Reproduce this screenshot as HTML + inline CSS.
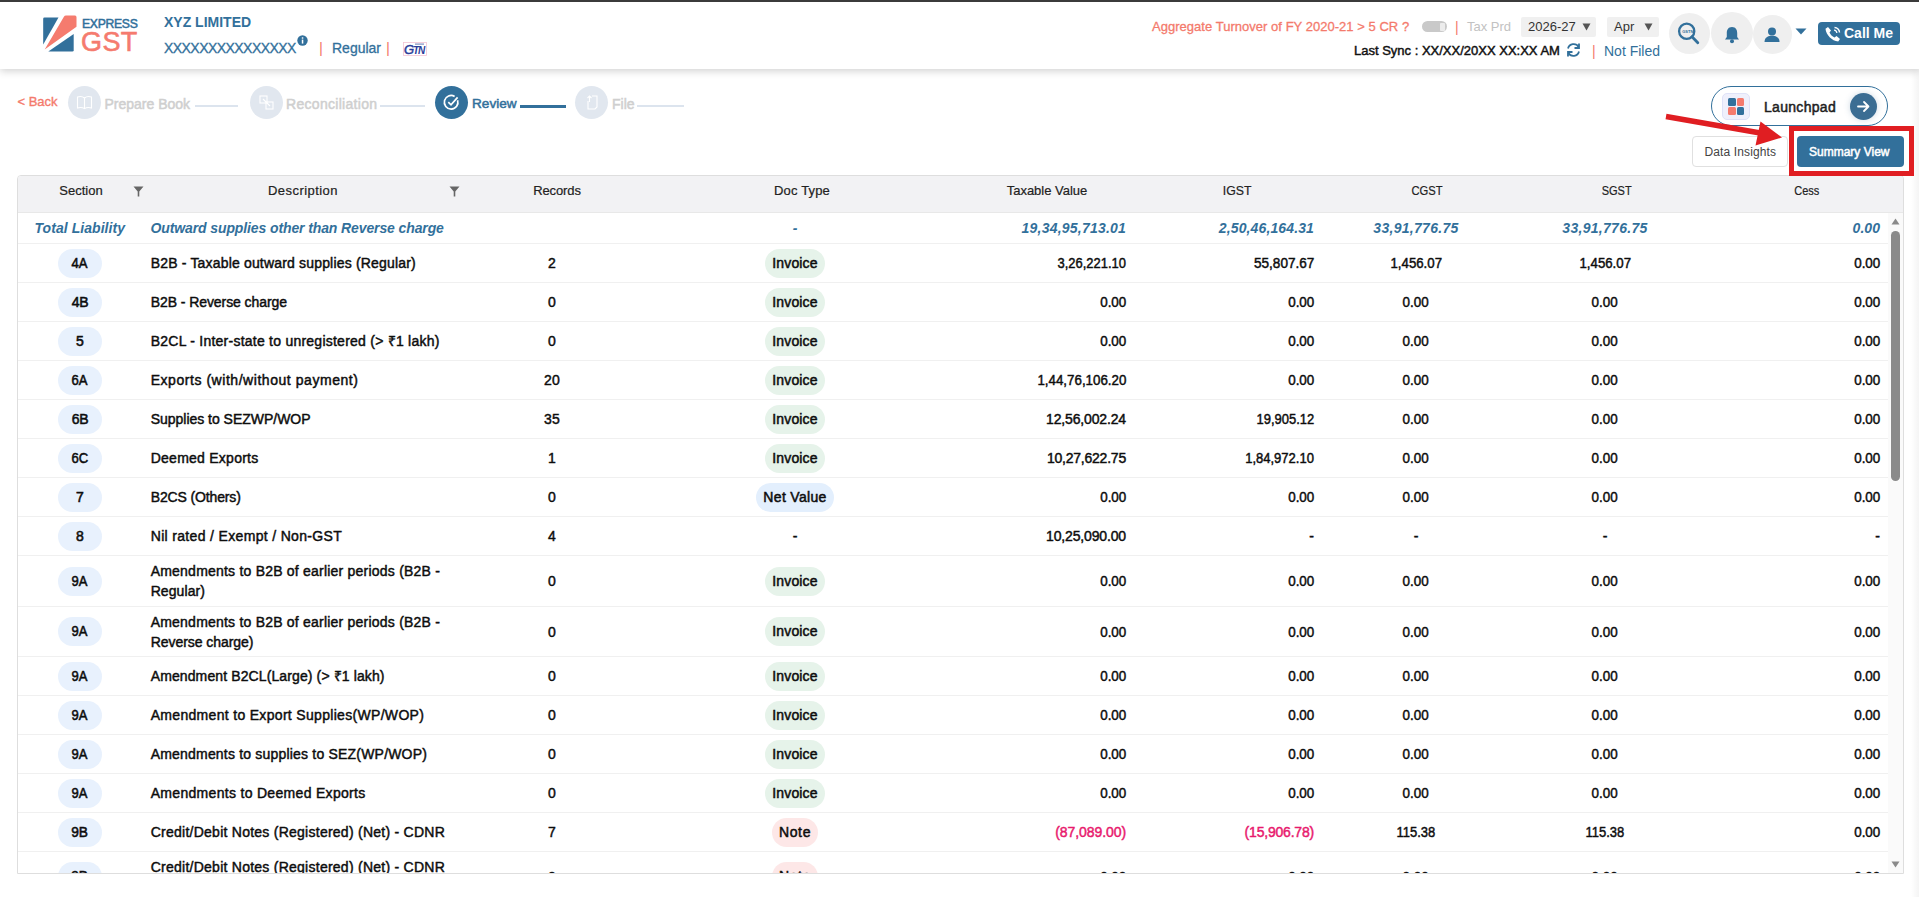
<!DOCTYPE html>
<html><head><meta charset="utf-8">
<style>
*{box-sizing:border-box}
html,body{margin:0;padding:0}
body{width:1919px;height:897px;overflow:hidden;position:relative;background:#fff;font-family:"Liberation Sans",sans-serif;color:#111}
.a{position:absolute;white-space:nowrap}
.topbar{position:absolute;left:0;top:0;width:1919px;height:2px;background:#3b3b3b;z-index:5}
.hdr{position:absolute;left:0;top:0;width:1919px;height:69px;background:#fff;box-shadow:0 2px 8px rgba(0,0,0,.19);z-index:2}
.blue{color:#32709b}
.coral{color:#f47a6c}
.circ{position:absolute;width:41px;height:41px;border-radius:50%;background:#efefef}
.sel{position:absolute;top:17px;height:20px;background:#f0f0f0;border-radius:2px;font-size:13px;line-height:20px;color:#333}
/* stepper */
.sc{position:absolute;width:33px;height:33px;border-radius:50%;background:#e1e7ef}
.sl{position:absolute;font-size:14px;color:#cfcfcf;-webkit-text-stroke:0.5px #cfcfcf;line-height:16px;top:95.5px}
.ln{position:absolute;top:105px;height:2px;background:#dce4ee}
/* table */
.tbl{position:absolute;left:17px;top:175px;width:1887px;height:699px;border:1px solid #dedede;border-radius:4px 4px 0 0;overflow:hidden;background:#fff}
.th{position:absolute;left:0;top:0;width:1886px;height:37px;background:#f2f2f4;border-bottom:1px solid #e8e8e8}
.th div{position:absolute;top:0;height:37px;line-height:29px;font-size:13px;color:#222;text-align:center;-webkit-text-stroke:0.2px #222}
.body{position:absolute;left:-18px;top:-176px;width:1919px;height:897px}
.row{position:absolute;left:17px;width:1871px;border-bottom:1px solid #f0f0f0}
.row .c{position:absolute;top:0;bottom:0;display:flex;align-items:center;font-size:14px;color:#0d0d0d;-webkit-text-stroke:0.45px currentColor}
.c.sec{left:0;width:126px;justify-content:center}
.spill{display:inline-block;width:44px;height:29px;line-height:29px;border-radius:15px;background:#e8f1fd;text-align:center;font-size:14px;-webkit-text-stroke:0.55px #0d0d0d}
.c.desc{left:133.7px;width:320px;line-height:20px;font-size:14px}
.c.rec{left:435px;width:200px;justify-content:center;font-size:14px}
.c.dt{left:628px;width:300px;justify-content:center}
.pill{display:inline-block;height:29px;line-height:29px;border-radius:15px;padding:0 7px;font-size:14px;-webkit-text-stroke:0.5px #0d0d0d}
.pill.inv{background:#e6f3ea}
.pill.net{background:#e3effd}
.pill.note{background:#fde7e7}
.c.tv,.c.ig,.c.ce{justify-content:flex-end;font-size:14px}
.c.tv{right:762px}
.c.ig{right:574px}
.c.ce{right:8px}
.c.cg{left:1299px;width:200px;justify-content:center;font-size:14px}
.c.sg{left:1488px;width:200px;justify-content:center;font-size:14px}
.neg{color:#e8196d !important}
.tot{position:absolute;left:17px;width:1871px;top:213px;height:31px;border-bottom:1px solid #f0f0f0}
.tot div{position:absolute;top:0;height:30px;line-height:30px;font-weight:bold;font-style:italic;font-size:14px;color:#32709b}
.sb{position:absolute;left:1888px;top:213px;width:15px;height:660px;background:#fafafa}
</style></head>
<body>
<div class="topbar"></div>
<div class="a" style="left:1911px;top:69px;width:8px;height:828px;background:linear-gradient(to right,rgba(0,0,0,0),rgba(0,0,0,0.045))"></div>
<div class="hdr">
  <!-- logo -->
  <svg class="a" style="left:40px;top:12px" width="100" height="44" viewBox="40 12 100 44">
    <path d="M44.5 17.4 L58.5 17.6 L43.2 44.6 L43.2 18.8 Q43.2 17.4 44.5 17.4Z" fill="#32709b"/>
    <path d="M44.7 49.6 L63.9 16.8 Q64.6 15.6 66 15.6 L75 15.6 Q76.5 15.6 76.5 17.2 L76.5 26.7 Z" fill="#f57b6e"/>
    <path d="M48.3 51.6 L73.7 33.9 L73.7 50.2 Q73.7 51.6 72.3 51.6 Z" fill="#32709b"/>
  </svg>
  <div class="a" style="left:82px;top:15.5px;font-size:12.2px;-webkit-text-stroke:0.5px #32709b;color:#32709b;letter-spacing:-0.3px;line-height:16px">EXPRESS</div>
  <div class="a" style="left:81px;top:27px;font-size:27px;color:#f57b6e;-webkit-text-stroke:0.6px #f57b6e;line-height:30px;letter-spacing:0.4px">GST</div>
  <div class="a blue" style="left:164px;top:12px;font-size:14px;font-weight:bold;line-height:20px">XYZ LIMITED</div>
  <div class="a blue" style="left:164px;top:38px;font-size:14px;letter-spacing:-0.55px;line-height:20px;-webkit-text-stroke:0.3px #32709b">XXXXXXXXXXXXXXX</div>
  <svg class="a" style="left:297px;top:35px" width="11" height="11" viewBox="0 0 11 11"><circle cx="5.5" cy="5.5" r="5.2" fill="#32709b"/><rect x="4.8" y="4.6" width="1.5" height="4" fill="#fff"/><rect x="4.8" y="2.3" width="1.5" height="1.4" fill="#fff"/></svg>
  <div class="a coral" style="left:319px;top:38px;font-size:15px;line-height:20px">|</div>
  <div class="a blue" style="left:332px;top:38px;font-size:14px;line-height:20px;-webkit-text-stroke:0.3px #32709b">Regular</div>
  <div class="a coral" style="left:386px;top:38px;font-size:15px;line-height:20px">|</div>
  <svg class="a" style="left:403px;top:40px" width="24" height="16" viewBox="0 0 24 16"><rect x="0.5" y="2.5" width="23" height="13" fill="#fff" stroke="#f3c4d4" stroke-width="0.8"/><text x="1" y="14" font-family="Liberation Sans" font-size="13" font-style="italic" fill="#2b3d9a" stroke="#2b3d9a" stroke-width="0.5">G</text><text x="10" y="14" font-family="Liberation Sans" font-size="10" font-weight="bold" font-style="italic" fill="#2b3d9a" letter-spacing="-1.2">TN</text><rect x="12" y="3.5" width="9" height="1.2" fill="#8090c0"/></svg>

  <!-- right header -->
  <div class="a coral" style="left:1152px;top:16.5px;font-size:13px;letter-spacing:0.03px;-webkit-text-stroke:0.3px #f47a6c;line-height:20px">Aggregate Turnover of FY 2020-21 &gt; 5 CR ?</div>
  <div class="a" style="left:1422px;top:21px;width:25px;height:11px;border-radius:6px;background:#c9c9c9"></div>
  <div class="a" style="left:1440px;top:23px;width:4.5px;height:8px;border-radius:1px;background:#ececec"></div>
  <div class="a coral" style="left:1455px;top:16.5px;font-size:14px;line-height:20px">|</div>
  <div class="a" style="left:1467px;top:16.5px;font-size:13px;line-height:20px;color:#c2c2c2">Tax Prd</div>
  <div class="sel" style="left:1521px;width:75px"><span style="position:absolute;left:7px">2026-27</span><svg style="position:absolute;left:61px;top:6px" width="9" height="8" viewBox="0 0 9 8"><path d="M0.5 0.5 L8.5 0.5 L4.5 7.5Z" fill="#555"/></svg></div>
  <div class="sel" style="left:1607px;width:52px"><span style="position:absolute;left:7px">Apr</span><svg style="position:absolute;left:37px;top:6px" width="9" height="8" viewBox="0 0 9 8"><path d="M0.5 0.5 L8.5 0.5 L4.5 7.5Z" fill="#555"/></svg></div>
  <div class="a" style="left:1354px;top:41px;font-size:13px;-webkit-text-stroke:0.45px #111;line-height:20px;color:#111">Last Sync : XX/XX/20XX XX:XX AM</div>
  <svg class="a" style="left:1565px;top:42px" width="17" height="16" viewBox="0 0 17 16"><path d="M3 6.5 A5.8 5.8 0 0 1 13.6 5" fill="none" stroke="#32709b" stroke-width="1.8"/><path d="M14 1.5 L14 6 L9.5 6" fill="none" stroke="#32709b" stroke-width="1.8"/><path d="M14 9.5 A5.8 5.8 0 0 1 3.4 11" fill="none" stroke="#32709b" stroke-width="1.8"/><path d="M3 14.5 L3 10 L7.5 10" fill="none" stroke="#32709b" stroke-width="1.8"/></svg>
  <div class="a coral" style="left:1592px;top:41px;font-size:14px;line-height:20px">|</div>
  <div class="a blue" style="left:1604px;top:40.5px;font-size:14px;line-height:20px">Not Filed</div>

  <div class="circ" style="left:1669px;top:12.5px"></div>
  <svg class="a" style="left:1675px;top:20px" width="28" height="28" viewBox="0 0 28 28"><circle cx="11.7" cy="11.2" r="7.6" fill="none" stroke="#32709b" stroke-width="2.3"/><path d="M17 16.8 L22.8 22.8" stroke="#32709b" stroke-width="2.8" stroke-linecap="round"/><text x="7.2" y="12.6" font-family="Liberation Sans" font-size="4" font-weight="bold" fill="#32709b">GSTN</text></svg>
  <div class="circ" style="left:1711px;top:12px;width:42px;height:42px"></div>
  <svg class="a" style="left:1722px;top:24.5px" width="20" height="20" viewBox="0 0 20 20"><path d="M10 2 C6.2 2 4.8 5 4.8 8 L4.8 12 L3 14.5 L17 14.5 L15.2 12 L15.2 8 C15.2 5 13.8 2 10 2Z" fill="#32709b"/><circle cx="10" cy="16.3" r="2" fill="#32709b"/></svg>
  <div class="circ" style="left:1753px;top:14.5px;width:39px;height:39px"></div>
  <svg class="a" style="left:1762px;top:24.5px" width="20" height="20" viewBox="0 0 20 20"><circle cx="10" cy="6.5" r="4" fill="#32709b"/><path d="M2.5 17 C2.5 12.5 6 10.8 10 10.8 C14 10.8 17.5 12.5 17.5 17Z" fill="#32709b"/></svg>
  <svg class="a" style="left:1795px;top:28px" width="12" height="7" viewBox="0 0 12 7"><path d="M0.5 0.5 L11.5 0.5 L6 6.5Z" fill="#32709b"/></svg>
  <div class="a" style="left:1818px;top:22px;width:82px;height:23px;border-radius:4px;background:#32709b"></div>
  <svg class="a" style="left:1824px;top:25px" width="18" height="18" viewBox="0 0 18 18"><path d="M4 2 L7 5.5 L5.5 7.5 C6.5 9.8 8.2 11.5 10.5 12.5 L12.5 11 L16 14 L14.2 16.5 C8 16 2 10 1.5 3.8Z" fill="#fff"/><path d="M10.5 2.5 A5 5 0 0 1 15.5 7.5" fill="none" stroke="#fff" stroke-width="1.4"/><path d="M10 5.2 A2.6 2.6 0 0 1 12.8 8" fill="none" stroke="#fff" stroke-width="1.3"/></svg>
  <div class="a" style="left:1844px;top:24px;font-size:14px;font-weight:bold;line-height:19px;color:#fff">Call Me</div>
</div>

<!-- stepper -->
<div class="a coral" style="left:17.5px;top:94px;font-size:13px;line-height:16px;-webkit-text-stroke:0.35px #f47a6c">&lt; Back</div>
<div class="sc" style="left:68px;top:86px"></div>
<svg class="a" style="left:76px;top:95px" width="17" height="15" viewBox="0 0 17 15"><path d="M1.5 2 C4 1.2 6.5 1.3 8.5 3 C10.5 1.3 13 1.2 15.5 2 L15.5 13 C13 12.3 10.5 12.4 8.5 13.6 C6.5 12.4 4 12.3 1.5 13Z M8.5 3 L8.5 13.6" fill="none" stroke="#fff" stroke-width="1.1"/></svg>
<div class="sl" style="left:104.5px">Prepare Book</div>
<div class="ln" style="left:195px;width:43px"></div>
<div class="sc" style="left:250px;top:86px"></div>
<svg class="a" style="left:258px;top:94px" width="17" height="17" viewBox="0 0 17 17"><rect x="2" y="2" width="7" height="7" fill="none" stroke="#fff" stroke-width="1.1"/><rect x="8" y="8" width="7" height="7" fill="none" stroke="#fff" stroke-width="1.1"/><path d="M5 5 L12 12" stroke="#fff" stroke-width="1.1"/></svg>
<div class="sl" style="left:286px;letter-spacing:0.3px">Reconciliation</div>
<div class="ln" style="left:380px;width:45px"></div>
<div class="sc" style="left:435px;top:86px;background:#32709b"></div>
<svg class="a" style="left:442px;top:93px" width="19" height="19" viewBox="0 0 19 19"><path d="M15.6 7.2 A6.8 6.8 0 1 1 12.6 3.4" fill="none" stroke="#fff" stroke-width="1.7"/><path d="M6.3 9.2 L9 11.8 L15.6 4.4" fill="none" stroke="#fff" stroke-width="1.7"/></svg>
<div class="sl" style="left:472px;font-size:13.6px;color:#32709b;-webkit-text-stroke:0.5px #32709b">Review</div>
<div class="ln" style="left:520px;width:46px;height:2.5px;background:#32709b"></div>
<div class="sc" style="left:575px;top:86px"></div>
<svg class="a" style="left:583px;top:94px" width="17" height="17" viewBox="0 0 17 17"><path d="M5 7 L5 15 L12 15 L14 13 L14 2 L9 2" fill="none" stroke="#fff" stroke-width="1.1"/><path d="M6.5 2 L6.5 8 M4.5 4 L6.5 2 L8.5 4" fill="none" stroke="#fff" stroke-width="1.1"/></svg>
<div class="sl" style="left:612px">File</div>
<div class="ln" style="left:637px;width:47px"></div>

<!-- launchpad -->
<div class="a" style="left:1711px;top:86px;width:177px;height:40px;border:1.5px solid #32709b;border-radius:20px;background:#fff"></div>
<div class="a" style="left:1722px;top:93px;width:28px;height:27px;border-radius:5px;background:#eff0fc;border:1px solid #dfe2f7"></div>
<div class="a" style="left:1728px;top:98px;width:7.5px;height:7.5px;border-radius:1.5px;background:#32709b"></div>
<div class="a" style="left:1736.5px;top:98px;width:7.5px;height:7.5px;border-radius:1.5px;background:#f57b6e"></div>
<div class="a" style="left:1728px;top:107px;width:7.5px;height:7.5px;border-radius:1.5px;background:#f57b6e"></div>
<div class="a" style="left:1736.5px;top:107px;width:7.5px;height:7.5px;border-radius:1.5px;background:#32709b"></div>
<div class="a" style="left:1764px;top:99px;font-size:14px;letter-spacing:0.3px;-webkit-text-stroke:0.5px #1e1e1e;line-height:16px;color:#1e1e1e">Launchpad</div>
<div class="a" style="left:1850px;top:93px;width:27px;height:27px;border-radius:50%;background:#3b6d93;box-shadow:0 0 6px rgba(59,109,147,.25)"></div>
<svg class="a" style="left:1855px;top:98px" width="17" height="17" viewBox="0 0 17 17"><path d="M3 8.5 L13.5 8.5 M9 4 L13.5 8.5 L9 13" fill="none" stroke="#fff" stroke-width="1.8" stroke-linecap="round" stroke-linejoin="round"/></svg>

<div class="a" style="left:1692px;top:136px;width:96px;height:31px;border:1px solid #e0e0e0;border-radius:4px;background:#fff"></div>
<div class="a" style="left:1704.5px;top:144px;font-size:12px;letter-spacing:0.12px;line-height:16px;color:#444">Data Insights</div>
<div class="a" style="left:1797px;top:136px;width:107px;height:31px;border-radius:4px;background:#32709b"></div>
<div class="a" style="left:1809px;top:144px;font-size:12px;-webkit-text-stroke:0.5px #fff;line-height:16px;color:#fff">Summary View</div>

<!-- table -->
<div class="tbl">
  <div class="th">
    <div style="left:0;width:126px"><span style="letter-spacing:0.028px">Section</span></div>
    <svg style="position:absolute;left:115px;top:10px" width="11" height="11" viewBox="0 0 11 11"><path d="M0.5 0.5 L10.5 0.5 L6.3 5.5 L6.3 10.5 L4.7 10.5 L4.7 5.5Z" fill="#666"/></svg>
    <div style="left:126px;width:318px"><span style="letter-spacing:0.45px">Description</span></div>
    <svg style="position:absolute;left:431px;top:10px" width="11" height="11" viewBox="0 0 11 11"><path d="M0.5 0.5 L10.5 0.5 L6.3 5.5 L6.3 10.5 L4.7 10.5 L4.7 5.5Z" fill="#666"/></svg>
    <div style="left:444px;width:190px"><span style="letter-spacing:-0.101px">Records</span></div>
    <div style="left:634px;width:300px"><span style="letter-spacing:0.159px">Doc Type</span></div>
    <div style="left:934px;width:190px"><span style="letter-spacing:-0.006px">Taxable Value</span></div>
    <div style="left:1124px;width:190px"><span style="display:inline-block;transform:scaleX(0.9461);transform-origin:center center">IGST</span></div>
    <div style="left:1314px;width:190px"><span style="display:inline-block;transform:scaleX(0.8633);transform-origin:center center">CGST</span></div>
    <div style="left:1504px;width:190px"><span style="display:inline-block;transform:scaleX(0.847);transform-origin:center center">SGST</span></div>
    <div style="left:1694px;width:190px"><span style="display:inline-block;transform:scaleX(0.8477);transform-origin:center center">Cess</span></div>
  </div>
  <div class="body">
    <div class="tot">
      <div style="left:17.5px"><span style="letter-spacing:0.056px">Total Liability</span></div>
      <div style="left:133.5px"><span style="letter-spacing:-0.112px">Outward supplies other than Reverse charge</span></div>
      <div style="left:628px;width:300px;text-align:center">-</div>
      <div style="right:762px"><span style="letter-spacing:0.213px">19,34,95,713.01</span></div>
      <div style="right:574px"><span style="letter-spacing:0.128px">2,50,46,164.31</span></div>
      <div style="left:1299px;width:200px;text-align:center"><span style="letter-spacing:0.295px">33,91,776.75</span></div>
      <div style="left:1488px;width:200px;text-align:center"><span style="letter-spacing:0.295px">33,91,776.75</span></div>
      <div style="right:8px"><span style="letter-spacing:0.046px">0.00</span></div>
    </div>
<div class="row" style="top:244px;height:39px">
<div class="c sec"><span class="spill"><span style="display:inline-block;transform:scaleX(0.9326);transform-origin:center center">4A</span></span></div>
<div class="c desc"><div><span style="letter-spacing:0.176px">B2B - Taxable outward supplies (Regular)</span></div></div>
<div class="c rec"><span>2</span></div>
<div class="c dt"><span class="pill inv"><span style="letter-spacing:0.155px">Invoice</span></span></div>
<div class="c tv"><span style="display:inline-block;transform:scaleX(0.9247);transform-origin:right center">3,26,221.10</span></div>
<div class="c ig"><span style="display:inline-block;transform:scaleX(0.9675);transform-origin:right center">55,807.67</span></div>
<div class="c cg"><span style="display:inline-block;transform:scaleX(0.9463);transform-origin:center center">1,456.07</span></div>
<div class="c sg"><span style="display:inline-block;transform:scaleX(0.9463);transform-origin:center center">1,456.07</span></div>
<div class="c ce"><span style="display:inline-block;transform:scaleX(0.9566);transform-origin:right center">0.00</span></div>
</div>
<div class="row" style="top:283px;height:39px">
<div class="c sec"><span class="spill"><span style="letter-spacing:-0.236px">4B</span></span></div>
<div class="c desc"><div><span style="letter-spacing:-0.073px">B2B - Reverse charge</span></div></div>
<div class="c rec"><span>0</span></div>
<div class="c dt"><span class="pill inv"><span style="letter-spacing:0.155px">Invoice</span></span></div>
<div class="c tv"><span style="display:inline-block;transform:scaleX(0.9566);transform-origin:right center">0.00</span></div>
<div class="c ig"><span style="display:inline-block;transform:scaleX(0.9566);transform-origin:right center">0.00</span></div>
<div class="c cg"><span style="display:inline-block;transform:scaleX(0.9566);transform-origin:center center">0.00</span></div>
<div class="c sg"><span style="display:inline-block;transform:scaleX(0.9566);transform-origin:center center">0.00</span></div>
<div class="c ce"><span style="display:inline-block;transform:scaleX(0.9566);transform-origin:right center">0.00</span></div>
</div>
<div class="row" style="top:322px;height:39px">
<div class="c sec"><span class="spill"><span>5</span></span></div>
<div class="c desc"><div><span style="letter-spacing:0.24px">B2CL - Inter-state to unregistered (&gt; ₹1 lakh)</span></div></div>
<div class="c rec"><span>0</span></div>
<div class="c dt"><span class="pill inv"><span style="letter-spacing:0.155px">Invoice</span></span></div>
<div class="c tv"><span style="display:inline-block;transform:scaleX(0.9566);transform-origin:right center">0.00</span></div>
<div class="c ig"><span style="display:inline-block;transform:scaleX(0.9566);transform-origin:right center">0.00</span></div>
<div class="c cg"><span style="display:inline-block;transform:scaleX(0.9566);transform-origin:center center">0.00</span></div>
<div class="c sg"><span style="display:inline-block;transform:scaleX(0.9566);transform-origin:center center">0.00</span></div>
<div class="c ce"><span style="display:inline-block;transform:scaleX(0.9566);transform-origin:right center">0.00</span></div>
</div>
<div class="row" style="top:361px;height:39px">
<div class="c sec"><span class="spill"><span style="display:inline-block;transform:scaleX(0.9326);transform-origin:center center">6A</span></span></div>
<div class="c desc"><div><span style="letter-spacing:0.545px">Exports (with/without payment)</span></div></div>
<div class="c rec"><span style="letter-spacing:0.264px">20</span></div>
<div class="c dt"><span class="pill inv"><span style="letter-spacing:0.155px">Invoice</span></span></div>
<div class="c tv"><span style="display:inline-block;transform:scaleX(0.9529);transform-origin:right center">1,44,76,106.20</span></div>
<div class="c ig"><span style="display:inline-block;transform:scaleX(0.9566);transform-origin:right center">0.00</span></div>
<div class="c cg"><span style="display:inline-block;transform:scaleX(0.9566);transform-origin:center center">0.00</span></div>
<div class="c sg"><span style="display:inline-block;transform:scaleX(0.9566);transform-origin:center center">0.00</span></div>
<div class="c ce"><span style="display:inline-block;transform:scaleX(0.9566);transform-origin:right center">0.00</span></div>
</div>
<div class="row" style="top:400px;height:39px">
<div class="c sec"><span class="spill"><span style="letter-spacing:-0.236px">6B</span></span></div>
<div class="c desc"><div><span style="letter-spacing:-0.019px">Supplies to SEZWP/WOP</span></div></div>
<div class="c rec"><span style="letter-spacing:0.264px">35</span></div>
<div class="c dt"><span class="pill inv"><span style="letter-spacing:0.155px">Invoice</span></span></div>
<div class="c tv"><span style="letter-spacing:-0.155px">12,56,002.24</span></div>
<div class="c ig"><span style="display:inline-block;transform:scaleX(0.9266);transform-origin:right center">19,905.12</span></div>
<div class="c cg"><span style="display:inline-block;transform:scaleX(0.9566);transform-origin:center center">0.00</span></div>
<div class="c sg"><span style="display:inline-block;transform:scaleX(0.9566);transform-origin:center center">0.00</span></div>
<div class="c ce"><span style="display:inline-block;transform:scaleX(0.9566);transform-origin:right center">0.00</span></div>
</div>
<div class="row" style="top:439px;height:39px">
<div class="c sec"><span class="spill"><span style="display:inline-block;transform:scaleX(0.9326);transform-origin:center center">6C</span></span></div>
<div class="c desc"><div><span style="letter-spacing:0.252px">Deemed Exports</span></div></div>
<div class="c rec"><span>1</span></div>
<div class="c dt"><span class="pill inv"><span style="letter-spacing:0.155px">Invoice</span></span></div>
<div class="c tv"><span style="letter-spacing:-0.219px">10,27,622.75</span></div>
<div class="c ig"><span style="display:inline-block;transform:scaleX(0.9304);transform-origin:right center">1,84,972.10</span></div>
<div class="c cg"><span style="display:inline-block;transform:scaleX(0.9566);transform-origin:center center">0.00</span></div>
<div class="c sg"><span style="display:inline-block;transform:scaleX(0.9566);transform-origin:center center">0.00</span></div>
<div class="c ce"><span style="display:inline-block;transform:scaleX(0.9566);transform-origin:right center">0.00</span></div>
</div>
<div class="row" style="top:478px;height:39px">
<div class="c sec"><span class="spill"><span>7</span></span></div>
<div class="c desc"><div><span style="letter-spacing:-0.132px">B2CS (Others)</span></div></div>
<div class="c rec"><span>0</span></div>
<div class="c dt"><span class="pill net"><span style="letter-spacing:0.318px">Net Value</span></span></div>
<div class="c tv"><span style="display:inline-block;transform:scaleX(0.9566);transform-origin:right center">0.00</span></div>
<div class="c ig"><span style="display:inline-block;transform:scaleX(0.9566);transform-origin:right center">0.00</span></div>
<div class="c cg"><span style="display:inline-block;transform:scaleX(0.9566);transform-origin:center center">0.00</span></div>
<div class="c sg"><span style="display:inline-block;transform:scaleX(0.9566);transform-origin:center center">0.00</span></div>
<div class="c ce"><span style="display:inline-block;transform:scaleX(0.9566);transform-origin:right center">0.00</span></div>
</div>
<div class="row" style="top:517px;height:39px">
<div class="c sec"><span class="spill"><span>8</span></span></div>
<div class="c desc"><div><span style="letter-spacing:0.335px">Nil rated / Exempt / Non-GST</span></div></div>
<div class="c rec"><span>4</span></div>
<div class="c dt"><span>-</span></div>
<div class="c tv"><span style="letter-spacing:-0.155px">10,25,090.00</span></div>
<div class="c ig"><span>-</span></div>
<div class="c cg"><span>-</span></div>
<div class="c sg"><span>-</span></div>
<div class="c ce"><span>-</span></div>
</div>
<div class="row" style="top:556px;height:51px">
<div class="c sec"><span class="spill"><span style="display:inline-block;transform:scaleX(0.9271);transform-origin:center center">9A</span></span></div>
<div class="c desc"><div><span style="letter-spacing:0.216px">Amendments to B2B of earlier periods (B2B -</span><br><span style="letter-spacing:0.075px">Regular)</span></div></div>
<div class="c rec"><span>0</span></div>
<div class="c dt"><span class="pill inv"><span style="letter-spacing:0.155px">Invoice</span></span></div>
<div class="c tv"><span style="display:inline-block;transform:scaleX(0.9566);transform-origin:right center">0.00</span></div>
<div class="c ig"><span style="display:inline-block;transform:scaleX(0.9566);transform-origin:right center">0.00</span></div>
<div class="c cg"><span style="display:inline-block;transform:scaleX(0.9566);transform-origin:center center">0.00</span></div>
<div class="c sg"><span style="display:inline-block;transform:scaleX(0.9566);transform-origin:center center">0.00</span></div>
<div class="c ce"><span style="display:inline-block;transform:scaleX(0.9566);transform-origin:right center">0.00</span></div>
</div>
<div class="row" style="top:607px;height:50px">
<div class="c sec"><span class="spill"><span style="display:inline-block;transform:scaleX(0.9271);transform-origin:center center">9A</span></span></div>
<div class="c desc"><div><span style="letter-spacing:0.216px">Amendments to B2B of earlier periods (B2B -</span><br><span style="letter-spacing:-0.048px">Reverse charge)</span></div></div>
<div class="c rec"><span>0</span></div>
<div class="c dt"><span class="pill inv"><span style="letter-spacing:0.155px">Invoice</span></span></div>
<div class="c tv"><span style="display:inline-block;transform:scaleX(0.9566);transform-origin:right center">0.00</span></div>
<div class="c ig"><span style="display:inline-block;transform:scaleX(0.9566);transform-origin:right center">0.00</span></div>
<div class="c cg"><span style="display:inline-block;transform:scaleX(0.9566);transform-origin:center center">0.00</span></div>
<div class="c sg"><span style="display:inline-block;transform:scaleX(0.9566);transform-origin:center center">0.00</span></div>
<div class="c ce"><span style="display:inline-block;transform:scaleX(0.9566);transform-origin:right center">0.00</span></div>
</div>
<div class="row" style="top:657px;height:39px">
<div class="c sec"><span class="spill"><span style="display:inline-block;transform:scaleX(0.9271);transform-origin:center center">9A</span></span></div>
<div class="c desc"><div><span style="letter-spacing:0.114px">Amendment B2CL(Large) (&gt; ₹1 lakh)</span></div></div>
<div class="c rec"><span>0</span></div>
<div class="c dt"><span class="pill inv"><span style="letter-spacing:0.155px">Invoice</span></span></div>
<div class="c tv"><span style="display:inline-block;transform:scaleX(0.9566);transform-origin:right center">0.00</span></div>
<div class="c ig"><span style="display:inline-block;transform:scaleX(0.9566);transform-origin:right center">0.00</span></div>
<div class="c cg"><span style="display:inline-block;transform:scaleX(0.9566);transform-origin:center center">0.00</span></div>
<div class="c sg"><span style="display:inline-block;transform:scaleX(0.9566);transform-origin:center center">0.00</span></div>
<div class="c ce"><span style="display:inline-block;transform:scaleX(0.9566);transform-origin:right center">0.00</span></div>
</div>
<div class="row" style="top:696px;height:39px">
<div class="c sec"><span class="spill"><span style="display:inline-block;transform:scaleX(0.9271);transform-origin:center center">9A</span></span></div>
<div class="c desc"><div><span style="letter-spacing:0.315px">Amendment to Export Supplies(WP/WOP)</span></div></div>
<div class="c rec"><span>0</span></div>
<div class="c dt"><span class="pill inv"><span style="letter-spacing:0.155px">Invoice</span></span></div>
<div class="c tv"><span style="display:inline-block;transform:scaleX(0.9566);transform-origin:right center">0.00</span></div>
<div class="c ig"><span style="display:inline-block;transform:scaleX(0.9566);transform-origin:right center">0.00</span></div>
<div class="c cg"><span style="display:inline-block;transform:scaleX(0.9566);transform-origin:center center">0.00</span></div>
<div class="c sg"><span style="display:inline-block;transform:scaleX(0.9566);transform-origin:center center">0.00</span></div>
<div class="c ce"><span style="display:inline-block;transform:scaleX(0.9566);transform-origin:right center">0.00</span></div>
</div>
<div class="row" style="top:735px;height:39px">
<div class="c sec"><span class="spill"><span style="display:inline-block;transform:scaleX(0.9271);transform-origin:center center">9A</span></span></div>
<div class="c desc"><div><span style="letter-spacing:0.195px">Amendments to supplies to SEZ(WP/WOP)</span></div></div>
<div class="c rec"><span>0</span></div>
<div class="c dt"><span class="pill inv"><span style="letter-spacing:0.155px">Invoice</span></span></div>
<div class="c tv"><span style="display:inline-block;transform:scaleX(0.9566);transform-origin:right center">0.00</span></div>
<div class="c ig"><span style="display:inline-block;transform:scaleX(0.9566);transform-origin:right center">0.00</span></div>
<div class="c cg"><span style="display:inline-block;transform:scaleX(0.9566);transform-origin:center center">0.00</span></div>
<div class="c sg"><span style="display:inline-block;transform:scaleX(0.9566);transform-origin:center center">0.00</span></div>
<div class="c ce"><span style="display:inline-block;transform:scaleX(0.9566);transform-origin:right center">0.00</span></div>
</div>
<div class="row" style="top:774px;height:39px">
<div class="c sec"><span class="spill"><span style="display:inline-block;transform:scaleX(0.9271);transform-origin:center center">9A</span></span></div>
<div class="c desc"><div><span style="letter-spacing:0.309px">Amendments to Deemed Exports</span></div></div>
<div class="c rec"><span>0</span></div>
<div class="c dt"><span class="pill inv"><span style="letter-spacing:0.155px">Invoice</span></span></div>
<div class="c tv"><span style="display:inline-block;transform:scaleX(0.9566);transform-origin:right center">0.00</span></div>
<div class="c ig"><span style="display:inline-block;transform:scaleX(0.9566);transform-origin:right center">0.00</span></div>
<div class="c cg"><span style="display:inline-block;transform:scaleX(0.9566);transform-origin:center center">0.00</span></div>
<div class="c sg"><span style="display:inline-block;transform:scaleX(0.9566);transform-origin:center center">0.00</span></div>
<div class="c ce"><span style="display:inline-block;transform:scaleX(0.9566);transform-origin:right center">0.00</span></div>
</div>
<div class="row" style="top:813px;height:39px">
<div class="c sec"><span class="spill"><span style="display:inline-block;transform:scaleX(0.9806);transform-origin:center center">9B</span></span></div>
<div class="c desc"><div><span style="letter-spacing:0.253px">Credit/Debit Notes (Registered) (Net) - CDNR</span></div></div>
<div class="c rec"><span>7</span></div>
<div class="c dt"><span class="pill note"><span style="letter-spacing:0.638px">Note</span></span></div>
<div class="c tv neg"><span style="letter-spacing:-0.069px">(87,089.00)</span></div>
<div class="c ig neg"><span style="letter-spacing:-0.199px">(15,906.78)</span></div>
<div class="c cg"><span style="display:inline-block;transform:scaleX(0.9289);transform-origin:center center">115.38</span></div>
<div class="c sg"><span style="display:inline-block;transform:scaleX(0.9289);transform-origin:center center">115.38</span></div>
<div class="c ce"><span style="display:inline-block;transform:scaleX(0.9566);transform-origin:right center">0.00</span></div>
</div>
<div class="row" style="top:852px;height:50px">
<div class="c sec"><span class="spill"><span style="display:inline-block;transform:scaleX(0.9806);transform-origin:center center">9B</span></span></div>
<div class="c desc"><div><span style="letter-spacing:0.253px">Credit/Debit Notes (Registered) (Net) - CDNR</span><br><span style="display:inline-block;transform:scaleX(0.9693);transform-origin:left center">(Amendment)</span></div></div>
<div class="c rec"><span>0</span></div>
<div class="c dt"><span class="pill note"><span style="letter-spacing:0.638px">Note</span></span></div>
<div class="c tv"><span style="display:inline-block;transform:scaleX(0.9566);transform-origin:right center">0.00</span></div>
<div class="c ig"><span style="display:inline-block;transform:scaleX(0.9566);transform-origin:right center">0.00</span></div>
<div class="c cg"><span style="display:inline-block;transform:scaleX(0.9566);transform-origin:center center">0.00</span></div>
<div class="c sg"><span style="display:inline-block;transform:scaleX(0.9566);transform-origin:center center">0.00</span></div>
<div class="c ce"><span style="display:inline-block;transform:scaleX(0.9566);transform-origin:right center">0.00</span></div>
</div>
    <div class="sb">
      <svg style="position:absolute;left:3px;top:5px" width="9" height="7" viewBox="0 0 9 7"><path d="M0.5 6.5 L4.5 0.5 L8.5 6.5Z" fill="#8a8a8a"/></svg>
      <div style="position:absolute;left:3.3px;top:18px;width:8.7px;height:250px;border-radius:4.5px;background:#8a8a8a"></div>
      <svg style="position:absolute;left:3px;top:648px" width="9" height="7" viewBox="0 0 9 7"><path d="M0.5 0.5 L8.5 0.5 L4.5 6.5Z" fill="#8a8a8a"/></svg>
    </div>
  </div>
</div>
<!-- annotation -->
<div class="a" style="left:1789px;top:126px;width:125px;height:50px;border:5px solid #e01e22"></div>
<svg class="a" style="left:0;top:0" width="1919" height="897" viewBox="0 0 1919 897"><path d="M1666 116.5 L1766 134" stroke="#e01e22" stroke-width="5.5"/><path d="M1782 137.5 L1760.5 121.5 L1755.5 145.5Z" fill="#e01e22"/></svg>
</body></html>
